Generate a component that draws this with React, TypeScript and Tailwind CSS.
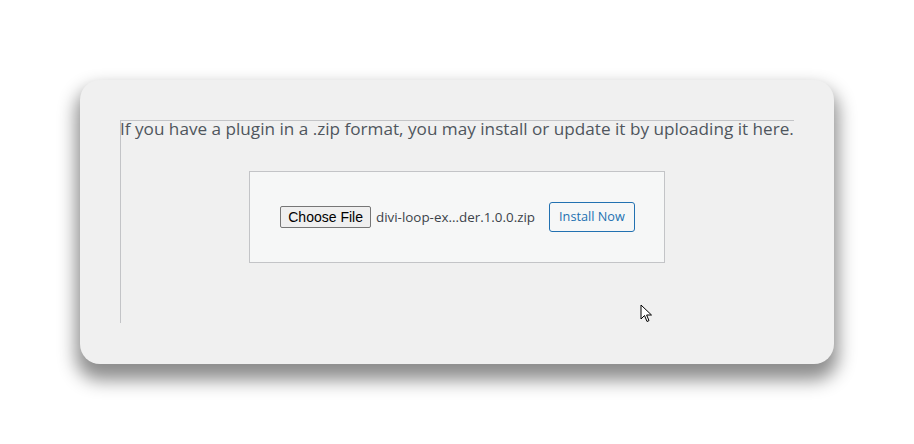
export default function App() {
  return (
    <div className="flex h-screen w-full items-center justify-center bg-white">
      <div className="h-[284px] w-[754px] rounded-[20px] bg-[#f0f0f0] px-[40px] pt-[40px] shadow-[0_12px_18px_4px_rgba(0,0,0,0.45)]">
        <div className="relative h-[203px] w-[674px] border-l border-t border-[#c3c4c7]">
          <p
            className="-mt-[4px] -ml-[1px] whitespace-nowrap text-[17.15px] leading-[24px] text-[#4f565d]"
            style={{ fontFamily: '"Open Sans", "Noto Sans", sans-serif' }}
          >
            If you have a plugin in a .zip format, you may install or update it by uploading it here.
          </p>
          <div className="-ml-[2px] mt-[30px] flex justify-center">
            <form className="flex h-[92px] w-[416px] items-center justify-center border border-[#c3c4c7] bg-[#f6f7f7] pl-[2px]">
              <button
                type="button"
                className="h-[22px] rounded-[2px] border border-[#767676] bg-[#efefef] px-[7px] text-[14px] leading-none text-black"
                style={{ fontFamily: '"Liberation Sans", Arial, sans-serif' }}
              >
                Choose File
              </button>
              <span
                className="ml-[5px] text-[13.4px] text-[#3c434a]"
                style={{ fontFamily: '"Open Sans", "Noto Sans", sans-serif' }}
              >
                divi-loop-ex...der.1.0.0.zip
              </span>
              <button
                type="button"
                className="ml-[14px] h-[30px] rounded-[3px] border border-[#2271b1] bg-[#f6f7f7] px-[9px] text-[12.7px] text-[#2271b1]"
                style={{ fontFamily: '"Open Sans", "Noto Sans", sans-serif' }}
              >
                Install Now
              </button>
            </form>
          </div>
          <svg
            className="absolute left-[519px] top-[183px]"
            width="13"
            height="20"
            viewBox="0 0 13 20"
          >
            <path
              d="M1 1 L1 15 L4.5 11.5 L7 17.5 L9 16.6 L6.6 11 L11.5 11 Z"
              fill="#fff"
              stroke="#000"
              strokeWidth="1"
              strokeLinejoin="round"
            />
          </svg>
        </div>
      </div>
    </div>
  );
}
